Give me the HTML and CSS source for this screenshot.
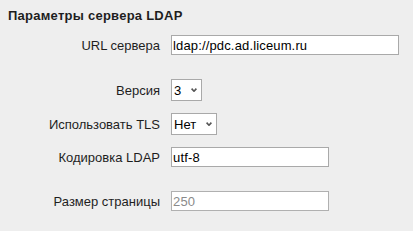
FILE: index.html
```html
<!DOCTYPE html>
<html lang="ru">
<head>
<meta charset="utf-8">
<title>Параметры сервера LDAP</title>
<link rel="stylesheet" href="styles.css">
</head>
<body>
<h2 class="title">Параметры сервера LDAP</h2>
<div class="form">
  <div class="row">
    <label class="label" for="url">URL сервера</label>
    <input class="text wide" id="url" type="text" value="ldap://pdc.ad.liceum.ru">
  </div>
  <div class="row sep">
    <label class="label" for="ver">Версия</label>
    <span class="sel">
      <select id="ver"><option>2</option><option selected>3</option></select>
      <svg class="chev" width="6" height="4" viewBox="0 0 6 4"><polyline points="0.6,0.6 3,3.2 5.4,0.6" fill="none" stroke="#555" stroke-width="1.6"/></svg>
    </span>
  </div>
  <div class="row">
    <label class="label" for="tls">Использовать TLS</label>
    <span class="sel">
      <select id="tls"><option>Да</option><option selected>Нет</option></select>
      <svg class="chev" width="6" height="4" viewBox="0 0 6 4"><polyline points="0.6,0.6 3,3.2 5.4,0.6" fill="none" stroke="#555" stroke-width="1.6"/></svg>
    </span>
  </div>
  <div class="row">
    <label class="label" for="enc">Кодировка LDAP</label>
    <input class="text narrow" id="enc" type="text" value="utf-8">
  </div>
  <div class="row sep">
    <label class="label" for="ps">Размер страницы</label>
    <input class="text narrow" id="ps" type="text" value="250" disabled>
  </div>
</div>
</body>
</html>
```
FILE: styles.css
```css
html, body {
  margin: 0;
  background: #eeeeee;
}
body {
  padding: 8px;
  font-family: "Liberation Sans", Arial, sans-serif;
  font-size: 13px;
  color: #1e1e1e;
}
.title {
  margin: 0;
  font-size: 13px;
  line-height: 15px;
  font-weight: bold;
  letter-spacing: 0.25px;
  color: #1e1e1e;
}
.form {
  display: flex;
  flex-direction: column;
  gap: 12px;
  margin-top: 12px;
}
.row {
  display: grid;
  grid-template-columns: 152px auto;
  column-gap: 11px;
  align-items: center;
  justify-content: start;
}
.row.sep {
  margin-top: 12px;
}
.label {
  text-align: right;
  white-space: nowrap;
  line-height: 15px;
}
.text {
  box-sizing: border-box;
  height: 20px;
  margin: 0;
  padding: 1px 1px;
  border: 1px solid #a9a9a9;
  background: #fff;
  font-family: "Liberation Sans", Arial, sans-serif;
  font-size: 13px;
  letter-spacing: 0.15px;
  color: #000;
  outline: none;
}
.text:disabled {
  color: #8a8a8a;
  background: #fff;
  border-color: #b0b0b0;
}
.wide { width: 228px; }
.narrow { width: 158px; }
.sel {
  position: relative;
  display: inline-block;
  justify-self: start;
}
.sel select {
  -webkit-appearance: none;
  appearance: none;
  box-sizing: border-box;
  height: 22px;
  margin: 0;
  padding: 0 19px 0 2px;
  border: 1px solid #a9a9a9;
  border-radius: 0;
  background: #fff;
  font-family: "Liberation Sans", Arial, sans-serif;
  font-size: 13px;
  color: #000;
  display: block;
}
.chev {
  position: absolute;
  right: 5px;
  top: 9px;
  pointer-events: none;
}
```
